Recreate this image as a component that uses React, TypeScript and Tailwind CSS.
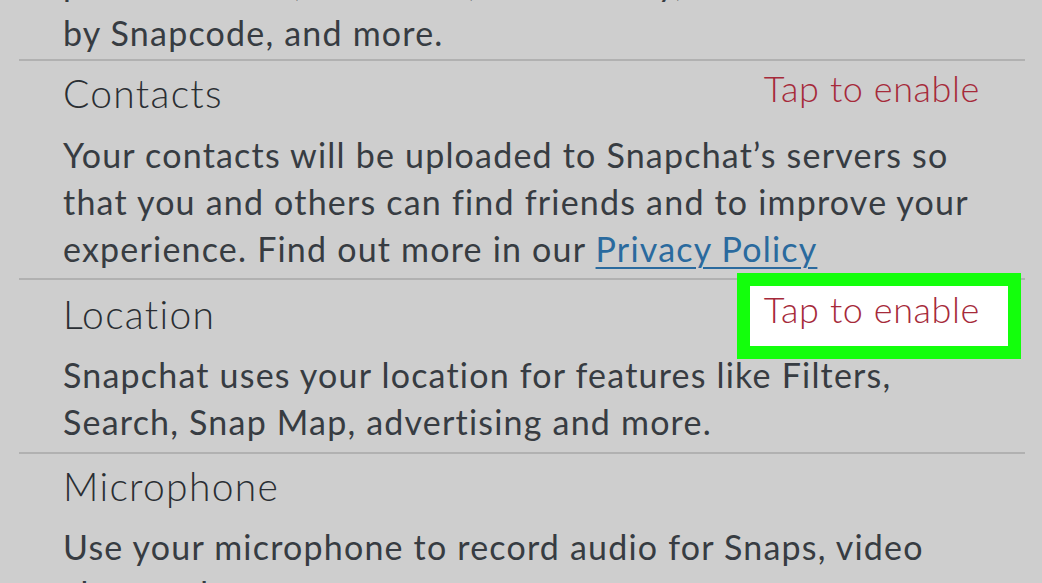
import React from "react";

const font = { fontFamily: "Lato, 'Noto Sans', sans-serif" };

function Title({ children }: { children: React.ReactNode }) {
  return (
    <div className="text-[39px] leading-[47px] font-light text-[#2a2e33] tracking-[1.3px]">
      {children}
    </div>
  );
}

function Body({ children, className = "" }: { children: React.ReactNode; className?: string }) {
  return (
    <div className={"text-[34px] leading-[47px] text-[#373c42] tracking-[1.2px] " + className}>
      {children}
    </div>
  );
}

function Enable({ highlight = false }: { highlight?: boolean }) {
  return (
    <div className="relative -mt-[5px] mr-[45px]">
      {highlight && (
        <div className="absolute left-[-27px] right-[-41px] top-[-13px] bottom-[-26px] border-[13px] border-[#13ff0c] bg-white" />
      )}
      <span className="relative text-[36px] leading-[47px] font-light text-[#a62a3a] tracking-[0.6px]">
        Tap to enable
      </span>
    </div>
  );
}

export default function App() {
  return (
    <div className="w-[1042px] h-[583px] bg-[#cecece] overflow-hidden" style={font}>
      <div className="ml-[19px] w-[1006px]">
        <div className="pl-[44px] -mt-[41px] pb-[3px]">
          <Body>phone number, username, Add Nearby, and</Body>
          <Body className="mt-[3px]">by Snapcode, and more.</Body>
        </div>

        <div className="border-t-2 border-[#b1b1b1] pl-[44px] pt-[9px] pb-[6px]">
          <div className="flex items-start justify-between">
            <Title>Contacts</Title>
            <Enable />
          </div>
          <div className="mt-[14px]">
            <Body>Your contacts will be uploaded to Snapchat’s servers so</Body>
            <Body>that you and others can find friends and to improve your</Body>
            <Body>
              experience. Find out more in our{" "}
              <span className="text-[#2a6a9e] underline decoration-2 underline-offset-[5px]">
                Privacy Policy
              </span>
            </Body>
          </div>
        </div>

        <div className="border-t-2 border-[#b1b1b1] pl-[44px] pt-[11px] pb-[7px]">
          <div className="flex items-start justify-between">
            <Title>Location</Title>
            <Enable highlight />
          </div>
          <div className="mt-[13px]">
            <Body>Snapchat uses your location for features like Filters,</Body>
            <Body>Search, Snap Map, advertising and more.</Body>
          </div>
        </div>

        <div className="border-t-2 border-[#b1b1b1] pl-[44px] pt-[9px]">
          <Title>Microphone</Title>
          <div className="mt-[13px]">
            <Body>Use your microphone to record audio for Snaps, video</Body>
            <Body>chat, and more.</Body>
          </div>
        </div>
      </div>
    </div>
  );
}
